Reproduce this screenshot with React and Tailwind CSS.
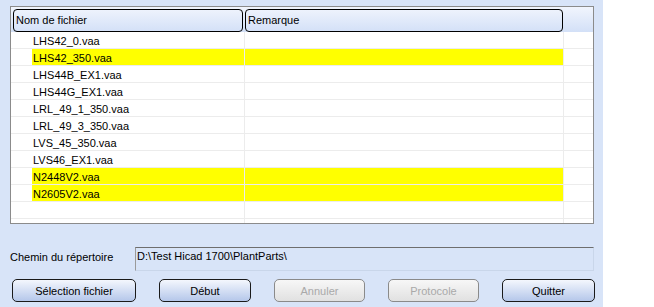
import React from 'react';

const files = [
  { name: 'LHS42_0.vaa', hi: false },
  { name: 'LHS42_350.vaa', hi: true },
  { name: 'LHS44B_EX1.vaa', hi: false },
  { name: 'LHS44G_EX1.vaa', hi: false },
  { name: 'LRL_49_1_350.vaa', hi: false },
  { name: 'LRL_49_3_350.vaa', hi: false },
  { name: 'LVS_45_350.vaa', hi: false },
  { name: 'LVS46_EX1.vaa', hi: false },
  { name: 'N2448V2.vaa', hi: true },
  { name: 'N2605V2.vaa', hi: true },
  { name: '', hi: false },
  { name: '', hi: false },
];

const buttons = [
  { label: 'Sélection fichier', w: 'w-[124px]', on: true },
  { label: 'Début', w: 'w-[92px]', on: true },
  { label: 'Annuler', w: 'w-[91px]', on: false },
  { label: 'Protocole', w: 'w-[91px]', on: false },
  { label: 'Quitter', w: 'w-[93px]', on: true },
];

const Row = ({ file }) => (
  <div className="flex h-[17px] shrink-0 border-b border-[#ececec]">
    <div className="w-[21px] shrink-0" />
    <div className={`flex w-[531px] shrink-0 ${file.hi ? 'bg-[#ffff00]' : ''}`}>
      <div className="w-[213px] shrink-0 border-r border-[#ececec] pl-[1px] pt-[1px] leading-[16px]">
        {file.name}
      </div>
      <div className="flex-1" />
    </div>
    <div className="flex-1 border-l border-[#ececec]" />
  </div>
);

export default function App() {
  return (
    <div className="flex w-[654px] h-[307px] bg-white font-['Liberation_Sans',Arial,sans-serif] text-[11px] text-black">
      <div className="flex flex-col w-[603px] h-full bg-[#d8e4f8] pl-[10px] pt-[6px]">
        {/* File list */}
        <div className="flex flex-col w-[584px] h-[218px] border border-[#8b8b8b] bg-white overflow-hidden">
          <div className="flex h-[25px] shrink-0 items-end bg-gradient-to-b from-[#f1f5fd] to-[#d3e0f7] pl-[2px]">
            <div className="w-[230px] h-[23px] rounded-[4px] border border-black pl-[2px] leading-[20px]">
              Nom de fichier
            </div>
            <div className="ml-[2px] w-[318px] h-[23px] rounded-[4px] border border-black pl-[2px] leading-[20px]">
              Remarque
            </div>
          </div>
          {files.map((f, i) => (
            <Row key={i} file={f} />
          ))}
        </div>

        {/* Directory */}
        <div className="flex items-start mt-[23px]">
          <div className="w-[125px] leading-[18px] pt-[1px]">Chemin du répertoire</div>
          <div className="w-[459px] h-[24px] border-t border-l border-t-[#6e6e6e] border-l-[#9a9a9a] border-r border-b border-r-[#c9d6ea] border-b-[#c9d6ea] pl-[1px] leading-[16px]">
            D:\Test Hicad 1700\PlantParts\
          </div>
        </div>

        {/* Buttons */}
        <div className="flex gap-[23px] mt-[8px] ml-[2px]">
          {buttons.map((b) => (
            <button
              key={b.label}
              className={`${b.w} h-[23px] rounded-[5px] border leading-[20px] text-center ${
                b.on
                  ? 'border-[#1a1a1a] bg-gradient-to-b from-[#f4f7fd] to-[#b5c7ea] text-black'
                  : 'border-[#8a8a8a] bg-gradient-to-b from-[#f7f7f7] to-[#e1e1e1] text-[#a9a9a9]'
              }`}
            >
              {b.label}
            </button>
          ))}
        </div>
      </div>
    </div>
  );
}
